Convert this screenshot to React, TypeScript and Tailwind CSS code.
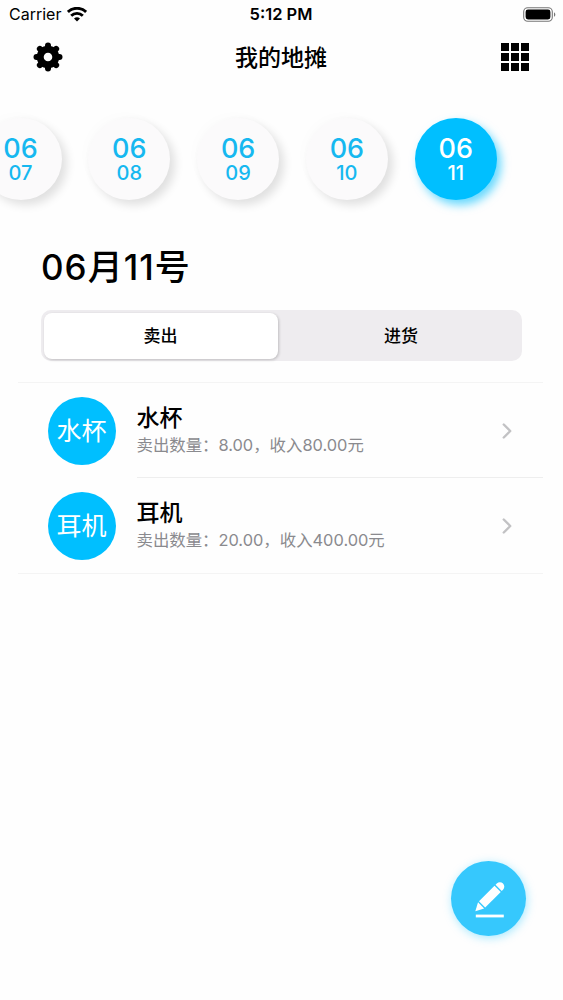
import { ChevronRight } from 'lucide-react';

const days = [
  { month: '06', day: '07' },
  { month: '06', day: '08' },
  { month: '06', day: '09' },
  { month: '06', day: '10' },
  { month: '06', day: '11' },
];

const records = [
  { id: 1, name: '水杯', detail: '卖出数量：8.00，收入80.00元' },
  { id: 2, name: '耳机', detail: '卖出数量：20.00，收入400.00元' },
];

const angles = [0, 45, 90, 135, 180, 225, 270, 315];

function WifiIcon() {
  return (
    <svg width="20" height="15" viewBox="0 0 20 15" fill="none" stroke="#000" strokeWidth="2.9">
      <path d="M0.9 5a13 13 0 0 1 18.2 0" />
      <path d="M4.2 8.7a8.3 8.3 0 0 1 11.6 0" />
      <path d="M10 14.6l-3-3a4.3 4.3 0 0 1 6 0z" fill="#000" stroke="none" />
    </svg>
  );
}

function BatteryIcon() {
  return (
    <svg width="33" height="15" viewBox="0 0 33 15">
      <rect x="0.7" y="0.7" width="28.6" height="13.6" rx="4" fill="none" stroke="#777" strokeWidth="1.1" />
      <rect x="2.6" y="2.5" width="24.8" height="10" rx="2.4" fill="#000" />
      <path d="M31 5.2c1.8 0.8 1.8 3.8 0 4.6z" fill="#777" />
    </svg>
  );
}

function GearIcon() {
  return (
    <svg width="30" height="30" viewBox="-15 -15 30 30" stroke="#000" fill="none">
      <circle r="7.8" strokeWidth="7" />
      {angles.map(a => (
        <path key={a} d="M0 -8.5V-11.5" strokeWidth="6" strokeLinecap="round" transform={`rotate(${a})`} />
      ))}
    </svg>
  );
}

function PencilIcon() {
  return (
    <svg width="32" height="40" viewBox="0 0 32 40" fill="#fff">
      <g transform="translate(2.3 32.2) rotate(45)">
        <path d="M0 0L-4.3 -8.2H4.3z" />
        <path d="M-4.4 -9.6h8.8v-22h-8.8z" />
        <path d="M-4.4 -33h8.8v-1.8a4.4 4.4 0 0 0 -8.8 0z" />
      </g>
      <rect x="2.8" y="35.6" width="28" height="2.8" />
    </svg>
  );
}

export default function App() {
  return (
    <div className="relative flex h-[1000px] w-[563px] flex-col overflow-hidden bg-[#fefefe] font-['Inter','Noto_Sans_CJK_SC',sans-serif] text-black">
      <div className="grid h-7 grid-cols-3 items-center pr-[7px] pl-[9px] text-[16px]">
        <div className="flex items-center gap-[6px]">
          <span>Carrier</span>
          <WifiIcon />
        </div>
        <span className="pr-[3px] text-center text-[16.5px] font-semibold">5:12 PM</span>
        <div className="flex justify-end">
          <BatteryIcon />
        </div>
      </div>

      <header className="flex h-[58px] items-center justify-between pr-[34px] pl-[33px]">
        <button title="设置"><GearIcon /></button>
        <h1 className="pt-0.5 pr-0.5 text-[23px] font-medium">我的地摊</h1>
        <button className="grid grid-cols-3 gap-[2px]" title="分类">
          {Array.from({ length: 9 }, (_, i) => (
            <span key={i} className="size-2 bg-black" />
          ))}
        </button>
      </header>

      <div className="-ml-[20.5px] flex h-[146px] shrink-0 gap-[26.8px] pt-8">
        {days.map(d => {
          const isActive = d.day === '11';
          return (
            <button
              key={d.day}
              className={`flex size-[82px] shrink-0 flex-col items-center rounded-full pt-[15px] font-medium ${
                isActive
                  ? 'bg-[#00bfff] text-white shadow-[4px_5px_10px_rgba(0,191,255,0.6)]'
                  : 'bg-[#fbfafb] text-[#16b8f0] shadow-[5px_5px_10px_rgba(0,0,0,0.12),-4px_-4px_10px_rgba(0,0,0,0.012)]'
              }`}
            >
              <span className="text-[27px] leading-8">{d.month}</span>
              <span className="text-[20px] leading-[17px]">{d.day}</span>
            </button>
          );
        })}
      </div>

      <h2 className="flex h-[78px] shrink-0 items-center pb-2 pl-[41px] text-[35px] font-medium tracking-[1px]">06月11号</h2>

      <div className="mx-[41px] flex h-[51px] shrink-0 rounded-[10px] bg-[#eeecef] p-[2.5px] text-[17px] font-medium">
        <button className="w-[234px] rounded-lg bg-white pt-0.5 shadow-[1px_1px_3px_rgba(0,0,0,0.2)]">卖出</button>
        <button className="flex-1 pt-0.5 pl-[5px]">进货</button>
      </div>

      <ul className="mt-[21px] mr-5 ml-[18px] border-y border-[#f4f4f4]">
        {records.map((r, i) => (
          <li key={r.id} className="flex h-[95px] items-center pl-[29.5px]">
            <div className="flex size-[68px] shrink-0 items-center justify-center rounded-full bg-[#00bfff] pt-0.5 text-[25px] text-white">
              {r.name}
            </div>
            <div className={`ml-[21px] flex h-full flex-1 items-center justify-between border-b pr-[23px] ${i === 0 ? 'border-[#eeeeee]' : 'border-transparent'}`}>
              <div>
                <p className="text-[23px] leading-[30px] font-medium">{r.name}</p>
                <p className="text-[16.4px] leading-6 text-[#8a8a8e]">{r.detail}</p>
              </div>
              <ChevronRight className="mt-0.5 h-8 w-[26px]" color="#c2c2c4" strokeWidth={2.2} />
            </div>
          </li>
        ))}
      </ul>

      <button className="absolute top-[861px] left-[451px] flex size-[75px] items-center justify-center rounded-full bg-[#36c8fd] shadow-[1px_2px_10px_rgba(0,191,255,0.35)]" title="记一笔">
        <PencilIcon />
      </button>
    </div>
  );
}
